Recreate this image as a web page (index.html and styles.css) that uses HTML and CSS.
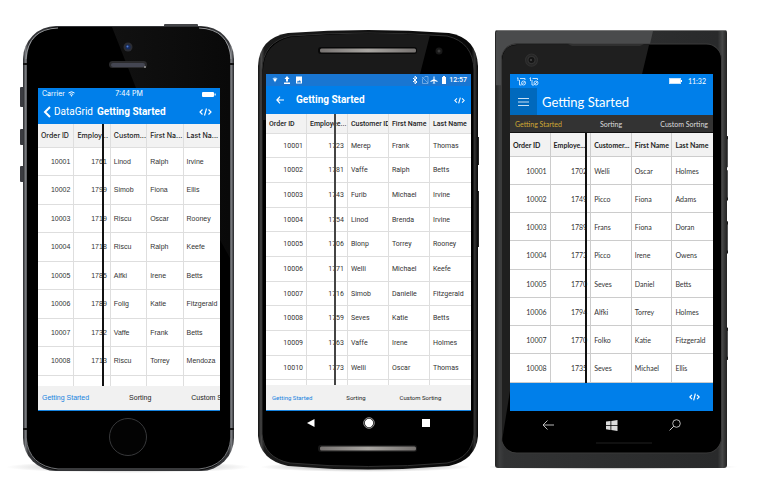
FILE: index.html
```html
<!DOCTYPE html>
<html lang="en">
<head>
<meta charset="utf-8">
<meta name="viewport" content="width=device-width, initial-scale=1">
<title>DataGrid - Getting Started</title>
<link rel="stylesheet" href="styles.css">
</head>
<body>
<main class="devices">

<section class="phone ios" aria-label="iOS">
  <svg class="shell" viewBox="0 0 250 500" preserveAspectRatio="none" aria-hidden="true">
    <defs>
      <linearGradient id="iosRim" x1="0" x2="1"><stop offset="0" stop-color="#242528"/><stop offset=".012" stop-color="#77797d"/><stop offset=".025" stop-color="#333437"/><stop offset=".975" stop-color="#333437"/><stop offset=".988" stop-color="#77797d"/><stop offset="1" stop-color="#242528"/></linearGradient>
      <radialGradient id="shade"><stop offset="0" stop-color="#999"/><stop offset=".6" stop-color="#d8d8d8"/><stop offset="1" stop-color="#fff"/></radialGradient>
      <linearGradient id="iosFace" x1="0" x2="1"><stop offset="0" stop-color="#111"/><stop offset="1" stop-color="#090909"/></linearGradient>
    </defs>
    <ellipse cx="128" cy="467" rx="122" ry="6" fill="url(#shade)"/>
    <rect x="164" y="24" width="34" height="4" rx="1" fill="#444548"/>
    <rect x="20" y="87" width="4" height="20" rx="1" fill="#3a3b40"/><rect x="20" y="129" width="4" height="16" rx="1" fill="#3a3b40"/><rect x="20" y="166" width="4" height="16" rx="1" fill="#3a3b40"/>
    <rect x="23" y="26" width="211" height="445" rx="33" fill="url(#iosRim)"/>
    <path d="M23 64h4M230 64h4M23 429h4M230 429h4" stroke="#111" stroke-width="2"/>
    <rect x="27" y="27" width="203" height="443" rx="31" fill="#000"/>
    <path d="M112 27h87a31 31 0 0 1 31 31v200L136 88Z" fill="url(#iosFace)"/>
    <path d="M26 59Q28 29 58 28M231 59Q229 29 199 28" fill="none" stroke="#97999c" stroke-width="1"/>
    <path d="M26 438Q29 466 58 469H199Q228 466 231 438" fill="none" stroke="#737578" stroke-width="1"/>
    <circle cx="128" cy="47" r="4.5" fill="#2b2d34"/><circle cx="128" cy="47" r="2.5" fill="#152b5d"/><circle cx="127.500" cy="46.500" r="1" fill="#5682d8"/>
    <rect x="109" y="61" width="38" height="7" rx="3.5" fill="#2a2a2c"/><rect x="111" y="63" width="34" height="4" rx="2" fill="#444652"/><circle cx="145" cy="67" r="1" fill="#999"/>
    <circle cx="128" cy="437" r="18.500" fill="#030303" stroke="#37383a" stroke-width="1"/>
  </svg>
  <div class="screen">
    <div class="status"><span class="carrier">Carrier <svg width="7" height="6" viewBox="0 0 14 12"><path d="M1 4Q7-1 13 4M3.500 7Q7 4 10.500 7" fill="none" stroke="#fff" stroke-width="2"/><path d="M5 9Q7 7 9 9L7 11.500Z" fill="#fff"/></svg></span><span class="clock">7:44 PM</span><svg class="battery" width="14" height="5" viewBox="0 0 14 5"><rect width="12" height="5" rx="1" fill="#fff"/><rect x="12.500" y="1.500" width="1.200" height="2" fill="#fff"/></svg></div>
    <header class="bar">
      <a class="back" href="#"><svg width="8" height="12" viewBox="0 0 8 12"><path d="M7 1 2 6l5 5" fill="none" stroke="#fff" stroke-width="2"/></svg>DataGrid</a>
      <h1>Getting Started</h1>
      <button class="code" aria-label="View code"><svg width="13" height="8" viewBox="0 0 26 16"><path d="m7 3-5 5 5 5M19 3l5 5-5 5M15 1l-4 14" fill="none" stroke="#fff" stroke-width="2.300"/></svg></button>
    </header>
    <div class="grid">
      <table>
        <thead><tr><th>Order ID</th><th>Employ...</th><th>Custom...</th><th>First Na...</th><th>Last Na...</th></tr></thead>
        <tbody>
          <tr><td>10001</td><td>1761</td><td>Linod</td><td>Ralph</td><td>Irvine</td></tr>
          <tr><td>10002</td><td>1799</td><td>Simob</td><td>Fiona</td><td>Ellis</td></tr>
          <tr><td>10003</td><td>1719</td><td>Riscu</td><td>Oscar</td><td>Rooney</td></tr>
          <tr><td>10004</td><td>1718</td><td>Riscu</td><td>Ralph</td><td>Keefe</td></tr>
          <tr><td>10005</td><td>1785</td><td>Alfki</td><td>Irene</td><td>Betts</td></tr>
          <tr><td>10006</td><td>1789</td><td>Folig</td><td>Katie</td><td>Fitzgerald</td></tr>
          <tr><td>10007</td><td>1732</td><td>Vaffe</td><td>Frank</td><td>Betts</td></tr>
          <tr><td>10008</td><td>1713</td><td>Riscu</td><td>Torrey</td><td>Mendoza</td></tr>
          <tr><td></td><td></td><td></td><td></td><td></td></tr>
        </tbody>
      </table>
      <div class="resizer"></div>
    </div>
    <nav class="tabs"><button class="active">Getting Started</button><button>Sorting</button><button>Custom Sorting</button></nav>
  </div>
</section>

<section class="phone android" aria-label="Android">
  <svg class="shell" viewBox="0 0 240 500" preserveAspectRatio="none" aria-hidden="true">
    <defs>
      <linearGradient id="droidRim" x1="0" x2="1"><stop offset="0" stop-color="#111"/><stop offset=".015" stop-color="#4a4a4a"/><stop offset=".03" stop-color="#1b1b1b"/><stop offset=".97" stop-color="#080808"/><stop offset=".985" stop-color="#333"/><stop offset="1" stop-color="#050505"/></linearGradient>
      <linearGradient id="metal" x1="0" x2="1"><stop offset="0" stop-color="#777371"/><stop offset=".5" stop-color="#a9a6a2"/><stop offset="1" stop-color="#777371"/></linearGradient>
    </defs>
    <ellipse cx="115" cy="467" rx="105" ry="5" fill="url(#shade)"/>
    <path d="M228 137h1v28h-1zM228 191h1v56h-1z" fill="#222"/>
    <path d="M8 66Q9 38 38 33Q118 27 199 33Q227 38 228 66V436Q226 460 199 466Q118 473 38 466Q10 460 8 436Z" fill="url(#droidRim)"/>
    <path d="M12 70Q13 42 40 36Q118 30 197 36Q223 42 224 70V434Q222 458 197 463Q118 470 40 463Q14 458 12 434Z" fill="#000" stroke="#303030"/>
    <path d="M13 70Q14 43 41 37Q112 31 180 35L170 74H16V120H13Z" fill="#1a1a1a"/>
    <rect x="68" y="47" width="99" height="7" rx="3" fill="#080808"/><rect x="70" y="48.500" width="96" height="4" rx="1.500" fill="url(#metal)"/>
    <rect x="68" y="445" width="99" height="7" rx="3" fill="#171717"/><rect x="70" y="446.500" width="96" height="4" rx="1.500" fill="url(#metal)"/>
    <circle cx="189" cy="51" r="3.500" fill="#181818"/><circle cx="189" cy="51" r="1.500" fill="#3a3a3a"/>
  </svg>
  <div class="screen">
    <div class="status">
      <svg width="30" height="8" viewBox="0 0 30 8"><path d="M.5 2.500Q3 .5 5.500 2.500L3 6.500Z" fill="#a9d0f3"/><path d="M2 3h2v2H2z" fill="#fff"/><path d="m15 0 2.500 3H16v2.500h-2V3h-1.500ZM12 6.500h6V8h-6z" fill="#fff"/><path fill-rule="evenodd" d="M24 .5h6v7h-6zM24.800 6.500h4.400L27.800 4l-1 1.500-.8-1Z" fill="#fff"/></svg>
      <svg class="signals" width="35" height="8" viewBox="0 0 35 8"><path d="m1 2 4 4-2 1.700V.3L5 2 1 6" fill="none" stroke="#fff"/><path d="M10.500 7.500V3L13 .5h3v7ZM10 1l6 6" fill="none" stroke="#80b5e7" stroke-width=".8"/><path d="M21.500.5h1v2.700l3 1.700v1l-3-.8v1.400l1 1h-3l1-1V5.100l-3 .8v-1l3-1.700Z" fill="#fff"/><path d="M30.500 1H31V0h2v1h1v7h-4V1Z" fill="#fff"/></svg>
      <span class="clock">12:57</span>
    </div>
    <header class="bar">
      <button class="back" aria-label="Back"><svg width="8" height="8" viewBox="0 0 8 8"><path d="M4 .7.900 4 4 7.300M1 4h7" fill="none" stroke="#fff" stroke-width="1.200"/></svg></button>
      <h1>Getting Started</h1>
      <button class="code" aria-label="View code"><svg width="11" height="7" viewBox="0 0 26 16"><path d="m7 3-5 5 5 5M19 3l5 5-5 5M15 1l-4 14" fill="none" stroke="#fff" stroke-width="2.500"/></svg></button>
    </header>
    <div class="grid">
      <table>
        <thead><tr><th>Order ID</th><th>Employee...</th><th>Customer ID</th><th>First Name</th><th>Last Name</th></tr></thead>
        <tbody>
          <tr><td>10001</td><td>1723</td><td>Merep</td><td>Frank</td><td>Thomas</td></tr>
          <tr><td>10002</td><td>1781</td><td>Vaffe</td><td>Ralph</td><td>Betts</td></tr>
          <tr><td>10003</td><td>1743</td><td>Furib</td><td>Michael</td><td>Irvine</td></tr>
          <tr><td>10004</td><td>1754</td><td>Linod</td><td>Brenda</td><td>Irvine</td></tr>
          <tr><td>10005</td><td>1706</td><td>Blonp</td><td>Torrey</td><td>Rooney</td></tr>
          <tr><td>10006</td><td>1771</td><td>Welli</td><td>Michael</td><td>Keefe</td></tr>
          <tr><td>10007</td><td>1716</td><td>Simob</td><td>Danielle</td><td>Fitzgerald</td></tr>
          <tr><td>10008</td><td>1759</td><td>Seves</td><td>Katie</td><td>Betts</td></tr>
          <tr><td>10009</td><td>1763</td><td>Vaffe</td><td>Irene</td><td>Holmes</td></tr>
          <tr><td>10010</td><td>1773</td><td>Welli</td><td>Oscar</td><td>Thomas</td></tr>
          <tr><td></td><td></td><td></td><td></td><td></td></tr>
        </tbody>
      </table>
      <div class="resizer"></div>
    </div>
    <nav class="tabs"><button class="active">Getting Started</button><button>Sorting</button><button>Custom Sorting</button></nav>
    <div class="keys">
      <button aria-label="Back"><svg width="8" height="8" viewBox="0 0 8 8"><path d="M7.500 0v8L0 4Z" fill="#fff"/></svg></button>
      <button aria-label="Home"><svg width="12" height="12" viewBox="0 0 12 12"><circle cx="6" cy="6" r="5.300" fill="none" stroke="#bbb" stroke-width=".8"/><circle cx="6" cy="6" r="4.200" fill="#fff"/></svg></button>
      <button aria-label="Recent apps"><svg width="8" height="8" viewBox="0 0 8 8"><path d="M0 0h8v8H0z" fill="#fff"/></svg></button>
    </div>
  </div>
</section>

<section class="phone windows" aria-label="Windows">
  <svg class="shell" viewBox="0 0 290 500" preserveAspectRatio="none" aria-hidden="true">
    <defs>
      <linearGradient id="winRim" x1="0" x2="1"><stop offset="0" stop-color="#232323"/><stop offset=".02" stop-color="#3c3d3e"/><stop offset=".04" stop-color="#323334"/><stop offset=".96" stop-color="#292a2b"/><stop offset=".98" stop-color="#464747"/><stop offset="1" stop-color="#222"/></linearGradient>
    </defs>
    <ellipse cx="121" cy="466" rx="128" ry="3" fill="url(#shade)"/>
    <path d="M235 136h3v31h-3zM235 170h3v29h-3zM235 221h3v31h-3zM235 327h3v32h-3z" fill="#555657"/>
    <path d="M235 136h3v3h-3zM235 197h3v3h-3zM235 221h3v3h-3zM235 250h3v3h-3zM235 327h3v3h-3zM235 356h3v3h-3z" fill="#161616"/>
    <path d="M7 30H235Q237 30 237 33V464Q237 467 234 467H8Q5 467 5 464V33Q5 30 7 30Z" fill="url(#winRim)"/>
    <path d="M8 31H163L160 44H83l-6-1H27Q13 44 12 58V85H6V32Z" fill="#4a4b4c"/>
    <path d="M6 30.500H236" stroke="#777" stroke-width="1"/>
    <rect x="11.500" y="44" width="220" height="408" rx="15" fill="#000" stroke="#3b3b3b"/>
    <path d="M27 45H159L152 74H20V390L12 440V60Q13 45 27 45Z" fill="#1f1f1f"/>
    <path d="M78 44h76l-4 2H82Z" fill="#303030"/>
    <path d="M106 442h56" stroke="#101010" stroke-width="2"/>
    <circle cx="41.500" cy="60" r="6" fill="#272727" stroke="#303030"/><circle cx="41.500" cy="60" r="3.500" fill="#151515" stroke="#353535"/><circle cx="41" cy="60" r="1" fill="#484848"/>
  </svg>
  <div class="screen">
    <div class="status">
      <svg width="22" height="9" viewBox="0 0 22 9"><g id="sim" fill="none" stroke="#d8ecff" stroke-width=".9"><path d="M0 1.500 1 .7V4M3 1.500h5V3M2.500 3v5h2"/><circle cx="6.500" cy="6" r="2"/><path d="m5 7.500 3-3"/></g><use href="#sim" x="12.500"/></svg>
      <svg class="battery" width="13" height="6" viewBox="0 0 13 6"><rect x=".5" y=".5" width="11" height="5" fill="#fff" stroke="#c9e4fb"/><path d="M12 2h1v2h-1z" fill="#fff"/></svg>
      <span class="clock">11:32</span>
    </div>
    <header class="bar">
      <button class="menu" aria-label="Menu"><svg width="11" height="8" viewBox="0 0 11 8"><path d="M0 .5h11M0 4h11M0 7.500h11" stroke="#c9e0f3"/></svg></button>
      <h1>Getting Started</h1>
    </header>
    <nav class="tabs"><button class="active">Getting Started</button><button>Sorting</button><button>Custom Sorting</button></nav>
    <div class="grid">
      <table>
        <thead><tr><th>Order ID</th><th>Employe...</th><th>Customer...</th><th>First Name</th><th>Last Name</th></tr></thead>
        <tbody>
          <tr><td>10001</td><td>1702</td><td>Welli</td><td>Oscar</td><td>Holmes</td></tr>
          <tr><td>10002</td><td>1749</td><td>Picco</td><td>Fiona</td><td>Adams</td></tr>
          <tr><td>10003</td><td>1789</td><td>Frans</td><td>Fiona</td><td>Doran</td></tr>
          <tr><td>10004</td><td>1773</td><td>Picco</td><td>Irene</td><td>Owens</td></tr>
          <tr><td>10005</td><td>1770</td><td>Seves</td><td>Daniel</td><td>Betts</td></tr>
          <tr><td>10006</td><td>1794</td><td>Alfki</td><td>Torrey</td><td>Holmes</td></tr>
          <tr><td>10007</td><td>1770</td><td>Folko</td><td>Katie</td><td>Fitzgerald</td></tr>
          <tr><td>10008</td><td>1735</td><td>Seves</td><td>Michael</td><td>Ellis</td></tr>
        </tbody>
      </table>
      <div class="resizer"></div>
    </div>
    <footer class="commands"><button class="code" aria-label="View code"><svg width="11" height="8" viewBox="0 0 26 18"><path d="m7 4-5 5 5 5M19 4l5 5-5 5M15 1l-4 16" fill="none" stroke="#fff" stroke-width="2.800"/></svg></button></footer>
    <div class="keys">
      <button aria-label="Back"><svg width="12" height="10" viewBox="0 0 12 10"><path d="M5.500.5 1 5l4.500 4.500M1 5h11" fill="none" stroke="#ccc" stroke-width=".9"/></svg></button>
      <button aria-label="Start"><svg width="12" height="11" viewBox="0 0 12 11"><path d="M0 1.500 4.500 1v4H0ZM5.300.9 11.500 0v5H5.300ZM0 5.800h4.500v4.100L0 9.300ZM5.300 5.800h6.200V11l-6.200-.9Z" fill="#ddd"/></svg></button>
      <button aria-label="Search"><svg width="12" height="12" viewBox="0 0 12 12"><circle cx="7.500" cy="4.500" r="3.800" fill="none" stroke="#ccc" stroke-width=".9"/><path d="M4.800 7.200.6 11.400" stroke="#ccc"/></svg></button>
    </div>
  </div>
</section>

</main>
</body>
</html>
```
FILE: styles.css
```css
* { box-sizing: border-box; }
body { margin: 0; background: #fff; }
.devices { display: grid; grid-template-columns: 250fr 240fr 290fr; align-items: start; }
.phone { position: relative; display: grid; color: #333; font-size: 7px; line-height: 10px; }
.shell { position: absolute; inset: 0; width: 100%; height: 100%; }
.screen { grid-column: 2; position: relative; min-width: 0; display: flex; flex-direction: column; }
.screen svg { display: block; flex: none; }
button { border: 0; padding: 0; background: none; color: inherit; font: inherit; white-space: nowrap; cursor: pointer; }
a { color: inherit; text-decoration: none; }
h1 { margin: 0; white-space: nowrap; }
.status, .bar { display: flex; align-items: center; color: #fff; background: #007fea; }
.code { margin-left: auto; }
.grid { position: relative; overflow: hidden; background: #fff; }
table { width: 100%; table-layout: fixed; border-collapse: separate; border-spacing: 0; }
th, td { padding: 0 3px; overflow: hidden; white-space: nowrap; text-align: left; border: solid #dedede; border-width: 0 1px 1px 0; }
th { padding-right: 0; color: #1c1c1c; background: #f2f2f2; }
th:last-child, td:last-child { border-right: 0; }
td:nth-child(-n+2) { text-align: right; }
.resizer { position: absolute; top: 0; bottom: 0; width: 2px; background: #111; }
.tabs { display: flex; align-items: center; overflow: hidden; color: #222; background: #f1f1f1; }
.tabs button { flex: none; }
.keys { display: flex; align-items: center; }

.ios { grid-template-columns: 38fr 182fr 30fr; padding: 88px 0 89px; font-family: "Liberation Sans", sans-serif; }
.ios .status { height: 12px; padding: 0 4px; display: grid; grid-template-columns: 1fr auto 1fr; font-family: Inter, sans-serif; }
.ios .carrier { display: flex; align-items: center; gap: 3px; }
.ios .battery { justify-self: end; }
.ios .bar { height: 24px; padding: 0 8px 0 5px; font-family: Roboto, sans-serif; font-size: 10px; }
.ios .back { display: flex; align-items: center; gap: 3px; margin-right: 4px; }
.ios h1 { font-size: 10px; font-weight: 700; }
.ios .grid { height: 262px; }
.ios th { height: 24px; font-family: Inter, sans-serif; font-weight: 500; }
.ios td { height: 28px; }
.ios tr:nth-child(even) td { height: 29px; }
.ios .resizer { left: 35%; }
.ios .tabs { height: 25px; gap: 40px; padding: 0 4px; border-bottom: 1px solid #1683df; }
.ios .active { color: #1683df; }

.android { grid-template-columns: 16fr 205fr 19fr; padding: 74px 0 65px; font-family: Roboto, sans-serif; }
.android .status { height: 12px; gap: 2px; padding: 0 4px 0 6px; background: #1976d2; }
.android .signals { margin-left: auto; }
.android .clock { font-weight: 500; }
.android .bar { height: 28px; padding: 0 6px 0 10px; }
.android h1 { margin-left: 12px; font-size: 10px; font-weight: 700; }
.android .grid { height: 271px; }
.android th { height: 20px; font-weight: 500; }
.android td { height: 25px; }
.android tr:nth-child(3n+1) td { height: 24px; }
.android .resizer { left: 33%; background: #444; }
.android .tabs { height: 26px; gap: 34px; padding: 0 6px; font-size: 6px; border-bottom: 1px solid #1683df; }
.android .active { color: #1683df; }
.android .keys { height: 24px; padding: 0 41px; justify-content: space-between; }

.windows { grid-template-columns: 20fr 203fr 67fr; padding: 74px 0 62px; font-family: Lato, sans-serif; }
.windows .status { height: 14px; padding: 0 7px; }
.windows .battery { margin-left: auto; margin-right: 6px; }
.windows .bar { height: 27px; }
.windows .menu { align-self: stretch; width: 27px; padding: 0 8px; background: #0069bd; }
.windows h1 { margin-left: 5px; font-size: 13px; font-weight: 400; }
.windows .tabs { height: 18px; padding: 0 5px; justify-content: space-between; color: #ddd; background: #333; border-bottom: 1px solid #111; }
.windows .active { color: #d0a933; }
.windows th, .windows td { border-color: #ccc; }
.windows th { height: 24px; font-weight: 700; color: #222; }
.windows td { height: 28px; }
.windows tr:nth-child(4n) td { height: 29px; }
.windows .resizer { left: 37%; }
.windows .commands { display: flex; align-items: center; height: 28px; padding: 0 13px; background: #007fea; }
.windows .keys { height: 28px; padding: 0 32px; justify-content: space-between; }
```
